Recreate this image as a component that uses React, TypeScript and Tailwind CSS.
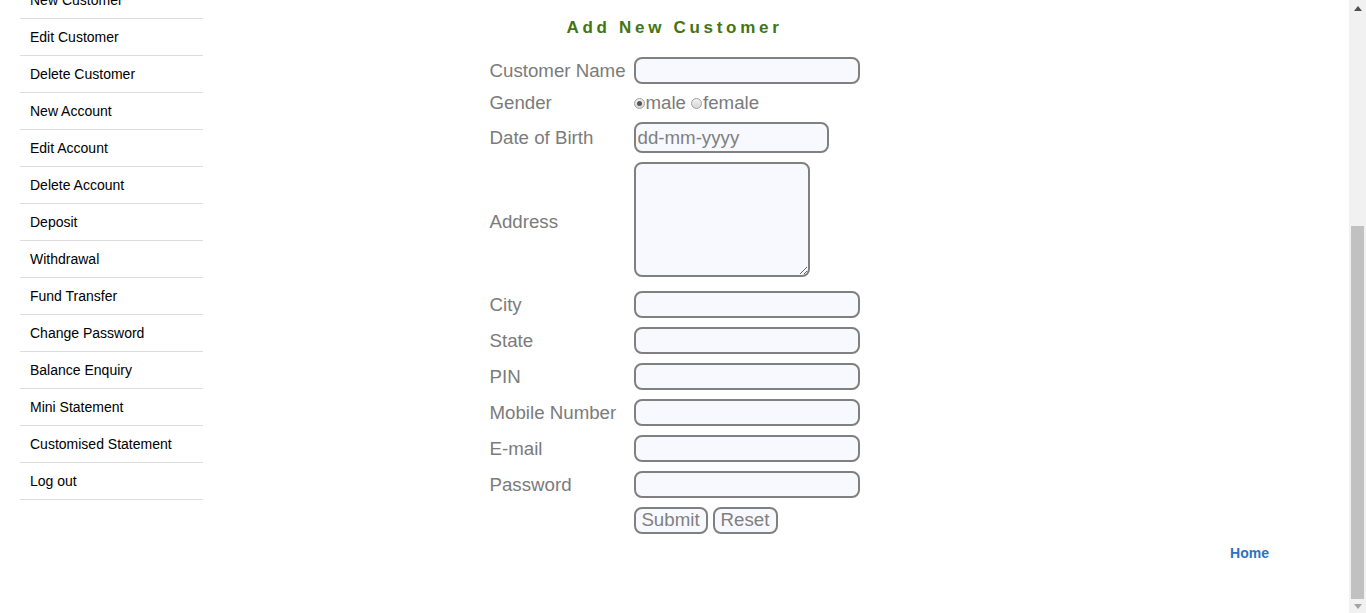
import React from 'react';

const menu = [
  'New Customer',
  'Edit Customer',
  'Delete Customer',
  'New Account',
  'Edit Account',
  'Delete Account',
  'Deposit',
  'Withdrawal',
  'Fund Transfer',
  'Change Password',
  'Balance Enquiry',
  'Mini Statement',
  'Customised Statement',
  'Log out',
];

const inputCls =
  'h-[27px] w-[226px] rounded-[8px] border-2 border-[#808080] bg-[#f8f9ff] px-1 text-[18.7px] text-[#808080] outline-none';

function Label({ children }: { children: React.ReactNode }) {
  return <div className="flex items-center text-[18.7px] leading-[20px] text-[#7b7b7b]">{children}</div>;
}

function Radio({ checked }: { checked?: boolean }) {
  return (
    <span className="mr-[1px] inline-flex h-[11px] w-[11px] items-center justify-center rounded-full border border-[#a0a0a0] bg-gradient-to-b from-[#f2f2f2] to-[#d6d6d6]">
      {checked && <span className="h-[5px] w-[5px] rounded-full bg-[#555]" />}
    </span>
  );
}

export default function App() {
  return (
    <div className="flex h-[613px] w-full overflow-hidden bg-white font-['Liberation_Sans',Arial,sans-serif]">
      <div className="flex min-w-0 flex-1 flex-col">
        <div className="grid grid-cols-[203px_1fr_203px]">
          {/* Side menu */}
          <ul className="ml-[20px] mt-[-18px]">
            {menu.map((item) => (
              <li
                key={item}
                className="flex h-[37px] items-center border-b border-[#dddddd] pl-[10px] text-[14px] text-black"
              >
                {item}
              </li>
            ))}
          </ul>

          {/* Form */}
          <div className="flex flex-col items-center pt-[18px]">
            <h2 className="text-[17px] font-bold leading-[20px] tracking-[3.7px] text-[#437512]">Add New Customer</h2>
            <div className="mt-[19px] grid grid-cols-[144px_226px] gap-y-[9px]">
              <Label>Customer Name</Label>
              <input className={inputCls} />

              <Label>Gender</Label>
              <div className="flex h-[20px] items-center text-[18.7px] leading-[20px] text-[#7b7b7b]">
                <Radio checked />
                <span>male</span>
                <span className="ml-[5px]" />
                <Radio />
                <span>female</span>
              </div>

              <Label>Date of Birth</Label>
              <input
                className="h-[31px] w-[195px] rounded-[8px] border-2 border-[#808080] bg-[#f8f9ff] px-[2px] text-[18.7px] text-[#808080] outline-none placeholder:text-[#808080]"
                placeholder="dd-mm-yyyy"
              />

              <Label>Address</Label>
              <div className="pb-[5px]">
                <textarea className="block h-[115px] w-[176px] rounded-[8px] border-2 border-[#808080] bg-[#f8f9ff] outline-none" />
              </div>

              <Label>City</Label>
              <input className={inputCls} />
              <Label>State</Label>
              <input className={inputCls} />
              <Label>PIN</Label>
              <input className={inputCls} />
              <Label>Mobile Number</Label>
              <input className={inputCls} />
              <Label>E-mail</Label>
              <input className={inputCls} />
              <Label>Password</Label>
              <input type="password" className={inputCls} />

              <div />
              <div className="flex gap-[5px]">
                <button className="h-[27px] w-[74px] rounded-[8px] border-2 border-[#808080] bg-[#f8f9ff] text-[18.7px] leading-none text-[#808080]">
                  Submit
                </button>
                <button className="h-[27px] w-[65px] rounded-[8px] border-2 border-[#808080] bg-[#f8f9ff] text-[18.7px] leading-none text-[#808080]">
                  Reset
                </button>
              </div>
            </div>
          </div>
          <div />
        </div>

        <div className="mt-[7px] pr-[80px] text-right">
          <a className="text-[14px] font-bold text-[#2d72c0]">Home</a>
        </div>
      </div>

      {/* Scrollbar */}
      <div className="flex h-[613px] w-[17px] flex-col items-center bg-[#f1f1f1]">
        <div className="flex h-[17px] w-full items-center justify-center">
          <svg width="8" height="5" viewBox="0 0 8 5">
            <path d="M0 5 L4 0 L8 5 Z" fill="#505050" />
          </svg>
        </div>
        <div className="mt-[209px] h-[373px] w-[13px] bg-[#c1c1c1]" />
        <div className="flex h-[17px] w-full flex-1 items-center justify-center">
          <svg width="8" height="5" viewBox="0 0 8 5">
            <path d="M0 0 L8 0 L4 5 Z" fill="#a3a3a3" />
          </svg>
        </div>
      </div>
    </div>
  );
}
